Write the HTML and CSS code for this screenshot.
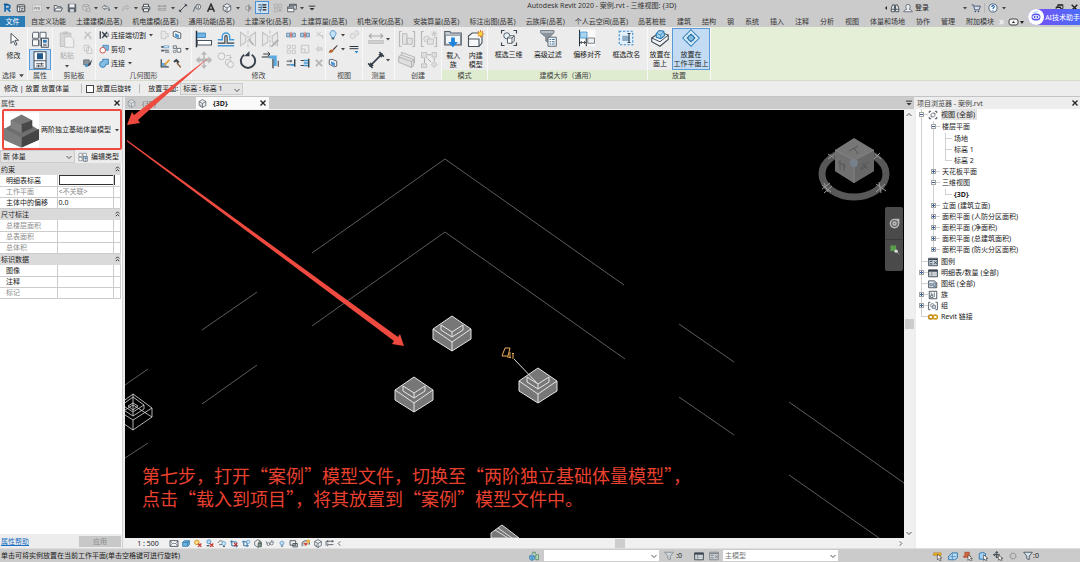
FILE: index.html
```
<!DOCTYPE html>
<html lang="zh">
<head>
<meta charset="utf-8">
<title>Autodesk Revit 2020 - 案例.rvt - 三维视图: {3D}</title>
<link rel="stylesheet" href="styles.css">
</head>
<body>
<svg class="defs" aria-hidden="true">
  <symbol id="down" viewBox="0 0 6 6"><path d="M1 2h4L3 4.500z" fill="#444"/></symbol>
  <symbol id="chev" viewBox="0 0 8 8"><path d="M1.500 3L4 5.500 6.500 3" fill="none" stroke="#555"/></symbol>
  <symbol id="dbl" viewBox="0 0 8 8"><path d="M2 3.500l2-2 2 2M2 6.500l2-2 2 2" fill="none" stroke="#222"/></symbol>
  <symbol id="x" viewBox="0 0 8 8"><path d="M1.500 1.500l5 5m0-5l-5 5" stroke="#222" stroke-width="1.300"/></symbol>
  <symbol id="rlogo" viewBox="0 0 16 16"><path d="M5 14V3h4.500a3 3 0 010 6H5m4 0l4 5" fill="none" stroke="#1b6fb5" stroke-width="3"/><path d="M3 2h6" stroke="#0d4a80" stroke-width="2"/></symbol>
  <symbol id="home" viewBox="0 0 16 16"><rect x="2" y="3" width="12" height="11" rx="1" fill="#f4f4f4" stroke="#3b444e" stroke-width="1.600"/><path d="M2 6h12M6 6v8M8 9h4M8 11.500h4" stroke="#3b444e" stroke-width="1.400"/></symbol>
  <symbol id="pm" viewBox="0 0 20 16"><rect x="1" y="2" width="18" height="13" rx="1" fill="#e2e2e2" stroke="#a8a8a8"/><path d="M4 12V6h3v3H4M9 12V6l2 3 2-3v6M15 6v6" fill="none" stroke="#999" stroke-width="1.500"/></symbol>
  <symbol id="open" viewBox="0 0 16 16"><path d="M2 13V4h4l1 2h6v2M2 13l3-5h10l-2 5z" fill="#eee" stroke="#4b5560" stroke-width="1.400"/></symbol>
  <symbol id="save" viewBox="0 0 16 16"><path d="M2 2h12v12H2z" fill="#5d6670" stroke="#3b444e"/><path d="M4 2h8v5H4z" fill="#f2f2f2"/><path d="M5 10h6v4H5z" fill="#e2e2e2"/></symbol>
  <symbol id="sync" viewBox="0 0 16 16"><path d="M8 2l5 2v6l-5 3-5-3V4zM3 4l5 2 5-2M8 6v7" fill="#d5d5d5" stroke="#949494"/><circle cx="12" cy="11" r="3" fill="#ccc" stroke="#999"/></symbol>
  <symbol id="undo" viewBox="0 0 16 16"><path d="M6 3L2 7l4 4V8.500c4-1 6 0 7 4 1-5-2-8-7-7z" fill="#eee" stroke="#4c5763" stroke-width="1.200"/></symbol>
  <symbol id="redo" viewBox="0 0 16 16"><path d="M10 3l4 4-4 4V8.500c-4-1-6 0-7 4-1-5 2-8 7-7z" fill="#ccc" stroke="#aaa" stroke-width="1.200"/></symbol>
  <symbol id="print" viewBox="0 0 16 16"><path d="M4 6V2h8v4M4 11H2V6h12v5h-2M4 9h8v5H4z" fill="#eee" stroke="#3b444e" stroke-width="1.400"/></symbol>
  <symbol id="meas" viewBox="0 0 16 16"><path d="M2 5h12M4 3L2 5l2 2m8-4l2 2-2 2" fill="none" stroke="#888" stroke-width="1.300"/><rect x="2" y="9" width="12" height="3" fill="#bbb" stroke="#999"/></symbol>
  <symbol id="dim" viewBox="0 0 16 16"><path d="M3 13L13 3M1 11l4 4m6-14l4 4" stroke="#333d48" stroke-width="1.400"/><path d="M2 14l1-4 3 3zM14 2l-1 4-3-3z" fill="#333d48"/></symbol>
  <symbol id="tag" viewBox="0 0 16 16"><circle cx="10" cy="6" r="4" fill="#eee" stroke="#4b5560" stroke-width="1.300"/><path d="M2 14l3-8h2M9 5l1-1v5" fill="none" stroke="#4b5560" stroke-width="1.300"/></symbol>
  <symbol id="abig" viewBox="0 0 16 16"><path d="M2.500 14L8 2l5.500 12M5 10h6" fill="none" stroke="#333" stroke-width="2.600"/></symbol>
  <symbol id="cube" viewBox="0 0 16 16"><path d="M8 1l6 3.500v7L8 15l-6-3.500v-7z" fill="#eef1f4" stroke="#4b5560" stroke-width="1.300"/><path d="M2 4.500L8 8l6-3.500M8 8v7M5 10v3" fill="none" stroke="#4b5560" stroke-width="1.300"/></symbol>
  <symbol id="sect" viewBox="0 0 16 16"><circle cx="8" cy="8" r="3.500" fill="#ddd" stroke="#8b8b8b" stroke-width="1.300"/><path d="M8 1v14l6-7z" fill="#999"/></symbol>
  <symbol id="thin" viewBox="0 0 16 16"><path d="M2 3h5M2 7h5M2 11h5" stroke="#222" stroke-width="1.200"/><path d="M9 3h6M9 7h6M9 11h6" stroke="#222" stroke-width="2.200"/><path d="M9 1L5 15" stroke="#2b7ac0" stroke-width="1.200"/></symbol>
  <symbol id="closew" viewBox="0 0 16 16"><path d="M2 2h5v5H2zM9 2h5v5H9zM2 9h5v5H2z" fill="none" stroke="#aaa" stroke-width="1.200"/><path d="M9 9l5 5m0-5l-5 5" stroke="#999" stroke-width="1.500"/></symbol>
  <symbol id="switch" viewBox="0 0 16 16"><path d="M4 2h11v8H4z" fill="#ddd" stroke="#4b5560" stroke-width="1.300"/><path d="M1 6h10v8H1z" fill="#f4f4f4" stroke="#4b5560" stroke-width="1.300"/><path d="M4 3.500h11M1 8h10" stroke="#4b5560" stroke-width="2"/></symbol>
  <symbol id="custom" viewBox="0 0 16 16"><path d="M3 5h10" stroke="#333" stroke-width="1.600"/><path d="M4 8h8l-4 4z" fill="#333"/></symbol>
  <symbol id="binoc" viewBox="0 0 16 16"><path d="M2 14V9l2-6h3v11zM14 14V9l-2-6H9v11zM7 7h2M2 10h5m2 0h5" fill="#f4f4f4" stroke="#36404a" stroke-width="1.400"/></symbol>
  <symbol id="person" viewBox="0 0 16 16"><path d="M8 2a3.500 4 0 013.500 4c0 2-1 3-1.500 4 2 1 4 1 5 4H1c1-3 3-3 5-4-.5-1-1.500-2-1.500-4A3.500 4 0 018 2z" fill="#eee" stroke="#55606c" stroke-width="1.300"/></symbol>
  <symbol id="cart" viewBox="0 0 16 16"><path d="M1 3h3l2 8h7l2-6H5" fill="#d8e2ee" stroke="#3d4e72" stroke-width="1.400"/><circle cx="7" cy="13.500" r="1.300" fill="#3d4e72"/><circle cx="12" cy="13.500" r="1.300" fill="#3d4e72"/></symbol>
  <symbol id="help" viewBox="0 0 16 16"><circle cx="8" cy="8" r="6.500" fill="#f6f9fc" stroke="#35506e" stroke-width="1.300"/><path d="M6 6.500c0-3 4-3 4-.5 0 1.500-2 1.500-2 3.500M8 11v1.500" fill="none" stroke="#1f5fae" stroke-width="1.700"/></symbol>
  <symbol id="restore" viewBox="0 0 16 16"><path d="M5 7V3h9v7h-4M2 7h8v6H2z" fill="none" stroke="#222" stroke-width="1.600"/><path d="M5 4h9M2 8h8" stroke="#222" stroke-width="2"/></symbol>

  <symbol id="cursor" viewBox="0 0 24 24"><path d="M8 3v16l4-4 3 7 2.500-1-3-7H20z" fill="#fff" stroke="#333d48" stroke-width="1.400"/></symbol>
  <symbol id="proptype" viewBox="0 0 24 24"><path d="M3 3h7v8H2V5zM12 3h8v8h-8zM2 13h8v8H2zM12 13h4v8h-4z" fill="#f8f8f8" stroke="#59646f" stroke-width="1.300"/><rect x="14" y="11" width="9" height="12" fill="#fff" stroke="#37424e" stroke-width="1.200"/><path d="M16 13h5v4h-5z" fill="#2f76b5"/><path d="M16 19h5M16 21h5" stroke="#37424e"/></symbol>
  <symbol id="prop" viewBox="0 0 24 24"><rect x="4" y="1" width="16" height="22" fill="#fff" stroke="#46515c" stroke-width="1.400"/><rect x="8" y="3" width="8" height="8" fill="#24598c"/><path d="M4 13h16M7 17h10M7 20h10M14 15.500v3M10 18.500v3" stroke="#46515c" stroke-width="1.300"/></symbol>
  <symbol id="paste" viewBox="0 0 24 24"><path d="M3 4h14v18H3z" fill="#d6d6d6" stroke="#b8b8b8"/><path d="M7 2h6v4H7z" fill="#c2c2c2"/><path d="M9 9h8l4 4v10H9z" fill="#f0f0f0" stroke="#bbb"/></symbol>
  <symbol id="cutx" viewBox="0 0 16 16"><path d="M3 3l9 9m0-9L3 12" stroke="#bbb" stroke-width="1.800"/><circle cx="3.500" cy="13" r="1.500" fill="none" stroke="#bbb"/><circle cx="12" cy="13" r="1.500" fill="none" stroke="#bbb"/></symbol>
  <symbol id="copy" viewBox="0 0 16 16"><path d="M2 2h7v9H2zM6 5h5l3 3v7H6z" fill="#eee" stroke="#bcbcbc" stroke-width="1.200"/></symbol>
  <symbol id="brushc" viewBox="0 0 16 16"><path d="M1 3h9v8H1z" fill="#8b959e" stroke="#49535e"/><path d="M15 2L9 9l-2 5 5-3z" fill="#3d4853"/><path d="M4 14c2 1 4 0 4-3L6 9c-1 2-4 2-2 5z" fill="#3a8fd0"/></symbol>
  <symbol id="cope" viewBox="0 0 16 16"><path d="M2 2v12M5 3l8 9M5 13l8-10" stroke="#2f3943" stroke-width="2"/><path d="M7 6h8v4H7z" fill="none" stroke="#48525c"/></symbol>
  <symbol id="cutg" viewBox="0 0 16 16"><path d="M6 2h9v8H6z" fill="#78b7e2" stroke="#3278ae"/><circle cx="6" cy="10" r="4.500" fill="#fff" stroke="#d44b43" stroke-width="1.500"/></symbol>
  <symbol id="joing" viewBox="0 0 16 16"><path d="M6 2h9v8H11a5 5 0 11-5-5z" fill="#83bde4" stroke="#2b74aa" stroke-width="1.300"/></symbol>
  <symbol id="gjoin" viewBox="0 0 16 16"><path d="M2 2h7v4h4v5H9v3H2z" fill="#e8e8e8" stroke="#c0c0c0" stroke-width="1.300"/></symbol>
  <symbol id="bwall" viewBox="0 0 16 16"><path d="M2 3l4-1 8 3v8l-4 1-8-4z" fill="#f0f3f6" stroke="#3d4854" stroke-width="1.300"/><path d="M5 5l6 3v5L5 10z" fill="#4492cf"/></symbol>
  <symbol id="beam" viewBox="0 0 16 16"><path d="M2 3h4v3H2zM2 9h4v3H2z" fill="#444f5a"/><path d="M6 3h8v3H6z" fill="#fff" stroke="#2f7ebd"/><path d="M6 10h8M8 13h7" stroke="#4a5560" stroke-width="1.500"/></symbol>
  <symbol id="split" viewBox="0 0 16 16"><path d="M2 3h5v4H2zM8 7h6v6H8z" fill="#fff" stroke="#4a5560" stroke-width="1.300"/><circle cx="4" cy="12" r="2" fill="none" stroke="#4a5560"/></symbol>
  <symbol id="paint" viewBox="0 0 16 16"><path d="M2 2v12h12" fill="none" stroke="#3b4650" stroke-width="2"/><path d="M3 8h7v5H3z" fill="#61a8da"/><path d="M14 2L7 9l-1 3 3-1 7-7z" fill="#e5a13a"/></symbol>
  <symbol id="hammer" viewBox="0 0 16 16"><path d="M2 5l5-4 5 5-3 3-2-3-3 1z" fill="#3c4650"/><path d="M8 8l6 7" stroke="#8a5933" stroke-width="2.200"/></symbol>

  <symbol id="align" viewBox="0 0 24 24"><path d="M2 1v22" stroke="#252f3a" stroke-width="2"/><path d="M3 4h11v6H3z" fill="#72b4e3" stroke="#2c79b5"/><path d="M3 14h19v6H3z" fill="#fff" stroke="#49545f" stroke-width="1.400"/></symbol>
  <symbol id="offset" viewBox="0 0 24 24"><path d="M1 21h22M1 13h6V9a5 5 0 0110 0v4h6" fill="none" stroke="#4199d8" stroke-width="1.800"/><path d="M1 17.500h9.500V9c0-2 3-2 3 0v8.500H23" fill="none" stroke="#303b47" stroke-width="1.500"/></symbol>
  <symbol id="mirror" viewBox="0 0 24 24"><path d="M2 3l7 5v8l-7 5zM22 3l-7 5v8l7 5z" fill="#e8e8e8" stroke="#c2c2c2" stroke-width="1.400"/><path d="M12 1v22" stroke="#b4b4b4" stroke-dasharray="4 2"/><path d="M13 12l6 8" stroke="#b4b4b4" stroke-width="2"/></symbol>
  <symbol id="mirror2" viewBox="0 0 24 24"><path d="M2 3l7 5v8l-7 5zM22 3l-7 5v8l7 5z" fill="#e8e8e8" stroke="#c2c2c2" stroke-width="1.400"/><path d="M12 1v22" stroke="#b4b4b4" stroke-dasharray="4 2"/><path d="M22 12l-8 8-1 3 3-1 8-8z" fill="#b4b4b4"/></symbol>
  <symbol id="move" viewBox="0 0 24 24"><path d="M12 0l4 5h-3v5h5V7l5 5-5 5v-3h-5v5h3l-4 5-4-5h3v-5H6v3l-5-5 5-5v3h5V5H8z" fill="#b9b9b9"/></symbol>
  <symbol id="copyel" viewBox="0 0 24 24"><circle cx="6" cy="7" r="4.500" fill="#eee" stroke="#bcbcbc" stroke-width="1.300"/><circle cx="15" cy="15" r="4" fill="#eee" stroke="#bcbcbc" stroke-width="1.300"/><circle cx="18" cy="18" r="4" fill="#eee" stroke="#bcbcbc" stroke-width="1.300"/><path d="M12 6h6v4m-2-2l2 2 2-2" fill="none" stroke="#bbb"/></symbol>
  <symbol id="rotate" viewBox="0 0 24 24"><path d="M7 5a9.500 9.500 0 1010 0" fill="none" stroke="#38424c" stroke-width="2.600"/><path d="M14 0v7H7z" fill="#38424c"/></symbol>
  <symbol id="trim" viewBox="0 0 24 24"><path d="M1 8h13M16 10v13" stroke="#242e38" stroke-width="1.600"/><path d="M11 8h8v12" fill="none" stroke="#59a9e0" stroke-width="4"/><path d="M3 4h9m-3-3l3 3-3 3M23 21v-8" fill="none" stroke="#333" stroke-width="1.300"/></symbol>
  <symbol id="splitb" viewBox="0 0 16 16"><path d="M1 5h5v6H1zM10 5h5v6h-5z" fill="#a9cee8" stroke="#3d6b90"/><path d="M6 8h4M8 3v10" stroke="#d04c45" stroke-width="1.400"/></symbol>
  <symbol id="unpin" viewBox="0 0 16 16"><path d="M4 3l7 7m0-7l-7 7M9 9h5v5" fill="none" stroke="#bcbcbc" stroke-width="1.400"/></symbol>
  <symbol id="array" viewBox="0 0 16 16"><path d="M2 2h5v5H2zM10 2h5v5h-5zM2 10h5v5H2zM10 10h5v5h-5z" fill="#eee" stroke="#bcbcbc" stroke-width="1.200"/></symbol>
  <symbol id="scale" viewBox="0 0 16 16"><path d="M2 2h12v12H2zM2 8h6v6" fill="none" stroke="#bcbcbc" stroke-width="1.300"/></symbol>
  <symbol id="pin" viewBox="0 0 16 16"><path d="M2 8h4m0-4v8l3-2h4V6H9z" fill="#ddd" stroke="#bcbcbc"/></symbol>
  <symbol id="ext" viewBox="0 0 16 16"><path d="M14 2v12" stroke="#222c36" stroke-width="2"/><path d="M1 5h8m-2-2l2 2-2 2M1 11h6" stroke="#303a44" stroke-width="1.400" fill="none"/><path d="M7 11h6" stroke="#4198d5" stroke-width="3"/></symbol>
  <symbol id="ext2" viewBox="0 0 16 16"><path d="M14 1v14" stroke="#222c36" stroke-width="2"/><path d="M1 4h6M1 12h6" stroke="#303a44" stroke-width="1.500"/><path d="M6 4h7M6 8h7M6 12h7" stroke="#4198d5" stroke-width="2.500"/></symbol>
  <symbol id="del" viewBox="0 0 16 16"><path d="M3 3l10 10M13 3L3 13" stroke="#b5b5b5" stroke-width="3"/></symbol>
  <symbol id="bulb" viewBox="0 0 16 16"><path d="M5.500 10C1 6 4 1 8 1s7 5 2.500 9v2h-5z" fill="#c3e2f8" stroke="#4384bf" stroke-width="1.300"/><path d="M6 14h4" stroke="#3b4650" stroke-width="2"/></symbol>
  <symbol id="bulb2" viewBox="0 0 16 16"><path d="M6 10c-3-3-1-6 2-6s5 3 2 6v1H6z" fill="#c3e2f8" stroke="#4384bf" stroke-width="1.300"/><path d="M6.500 13h3" stroke="#3b4650" stroke-width="1.500"/></symbol>
  <symbol id="brush" viewBox="0 0 16 16"><path d="M15 1L8 8l1 2 6-7z" fill="#4e3524"/><path d="M1 14c1-5 4-6 7-5l1 2c-2 3-5 3-8 3z" fill="#b4652c"/></symbol>
  <symbol id="dispg" viewBox="0 0 16 16"><path d="M2 7l4-2 4 2v5l-4 2-4-2zM9 3l3-2 3 2v4l-3 2" fill="#e3e3e3" stroke="#bcbcbc"/></symbol>
  <symbol id="lwt" viewBox="0 0 16 16"><path d="M1 4h14M1 7.500h14" stroke="#2a3440" stroke-width="1.600"/><path d="M9 11h6l-3 4z" fill="#2e84c9"/></symbol>
  <symbol id="mbig" viewBox="0 0 24 24"><path d="M3 8h18M6 5L3 8l3 3m12-6l3 3-3 3" fill="none" stroke="#aaa" stroke-width="1.500"/><path d="M2 14h20v4H2z" fill="#d0d0d0" stroke="#bbb"/></symbol>
  <symbol id="grp" viewBox="0 0 24 24"><path d="M5 2H2v20h3M19 2h3v20h-3" fill="none" stroke="#b8b8b8" stroke-width="1.600"/><path d="M6 5h6v14H6zM12 11h7v8h-7z" fill="#e3e3e3" stroke="#bababa" stroke-width="1.300"/></symbol>
  <symbol id="grp2" viewBox="0 0 24 24"><path d="M5 2H2v20h3M19 10h3v12h-3" fill="none" stroke="#b8b8b8" stroke-width="1.600"/><circle cx="9" cy="12" r="4" fill="#e5e5e5" stroke="#bababa"/><path d="M10 12h8v7h-8z" fill="#e3e3e3" stroke="#bababa"/><path d="M19 1v8m-4-4h8m-7-3l6 6m0-6l-6 6" stroke="#bbb"/></symbol>
  <symbol id="asm" viewBox="0 0 24 24"><path d="M1 8l17 6v8L1 15zM1 8l3-3 17 6v8l-3 3m0-8l3-3" fill="#dfdfdf" stroke="#b5b5b5" stroke-width="1.400"/><path d="M5 5V2l17 6v8" fill="none" stroke="#b5b5b5" stroke-width="1.400"/></symbol>
  <symbol id="parts" viewBox="0 0 24 24"><path d="M2 2h7v7H2zM16 2h6v6h-6zM2 17h7v5H2zM15 18l4-4 4 4-4 4z" fill="#ddd" stroke="#b8b8b8"/><path d="M10 5h5M6 10v6M10 10l5 5M19 9v4" stroke="#aaa" stroke-width="1.300"/></symbol>
  <symbol id="loadf" viewBox="0 0 24 24"><path d="M1 20V2h7l1 2h14v16z" fill="#c3ccd5" stroke="#56616d" stroke-width="1.500"/><path d="M2 7h20v12H2z" fill="#f3f6f9" stroke="#68727d"/><path d="M9.500 10h5v6h4L12 23l-6.500-7h4z" fill="#1d83dc"/></symbol>
  <symbol id="inplace" viewBox="0 0 24 24"><path d="M2 8l5-4h13v13l-4 5H2zM2 12h14v10" fill="#f7f8f9" stroke="#48535e" stroke-width="1.500"/><path d="M18 0v10M13 5h10M14.500 1.500l7 7m0-7l-7 7" stroke="#e4831e" stroke-width="1.400"/><circle cx="18" cy="5" r="2.500" fill="#ffd63d"/></symbol>
  <symbol id="box3" viewBox="0 0 24 24"><path d="M2 6V2h4M18 2h4v4M2 18v4h4M22 18v4h-4" fill="none" stroke="#3b4650" stroke-width="1.500"/><circle cx="9" cy="9" r="4" fill="#eaf2f8" stroke="#4a5f70" stroke-width="1.300"/><path d="M10 12l3-3h6v7l-3 3h-6zM10 12h6v7m0-7l3-3" fill="#fff" stroke="#46525d" stroke-width="1.200"/></symbol>
  <symbol id="filter" viewBox="0 0 24 24"><path d="M2 2h18v3l-6 6v8l-5-3v-5L2 5z" fill="#8b949c" stroke="#66717c"/><path d="M3 4h16" stroke="#d8dde1" stroke-width="1.500"/><path d="M12 11h11v12H12z" fill="#f9fafb" stroke="#59646e" stroke-width="1.300"/><path d="M14 14h2m1 0h4m-7 3h2m1 0h4m-7 3h2m1 0h4" stroke="#3c6f99" stroke-width="1.300"/></symbol>
  <symbol id="offal" viewBox="0 0 24 24"><path d="M1 1h22v22H1z" fill="#fafafa"/><path d="M2 1v22M11 12v11" stroke="#26303a" stroke-width="1.400"/><path d="M3 4h9v8H3z" fill="#a8d4f0" stroke="#358bc4"/><path d="M13 12h9v7h-9z" fill="#eef0f2" stroke="#56616c"/><path d="M3 18h7m-5-2l-2 2 2 2m3-4l2 2-2 2" fill="none" stroke="#222"/></symbol>
  <symbol id="rename" viewBox="0 0 24 24"><path d="M3 3h18v18H3z" fill="#e4f1fb" stroke="#3b91d3" stroke-width="1.500" stroke-dasharray="3 2"/><path d="M7 9h10v7H7z" fill="#8eadc6"/><path d="M14 6h4m-2 0v12m-2 0h4" stroke="#31404e" stroke-width="1.400"/></symbol>
  <symbol id="face" viewBox="0 0 24 24"><path d="M1 12L12 4l11 4v6l-11 9-11-6z" fill="#f1f3f5" stroke="#3c4650" stroke-width="1.400"/><path d="M1 12l11 5 11-9" fill="none" stroke="#3c4650" stroke-width="1.300"/><path d="M7 6l4-4 6 1 1 6-5 4-6-2z" fill="#a7d3ef" stroke="#2578af" stroke-width="1.400"/><path d="M7 6l6 2 4-5m-4 5v5" fill="none" stroke="#2578af"/></symbol>
  <symbol id="wplane" viewBox="0 0 24 24"><path d="M12 1l11 11-11 11L1 12z" fill="#d5e9f7" stroke="#317fb9" stroke-width="1.400"/><path d="M12 7l5 5-5 5-5-5z" fill="#8ec3e9" stroke="#266ea4" stroke-width="1.500"/><path d="M7 7l10 10m0-10L7 17" stroke="#6faed9" stroke-width=".8"/></symbol>

  <symbol id="tview" viewBox="0 0 16 16"><path d="M5 2H2v3m9-3h3v3M2 11v3h3m9-3v3h-3" fill="none" stroke="#303b46" stroke-width="1.400"/><path d="M5 7l2-2h4v4l-2 2H5z" fill="#fff" stroke="#4b5863" stroke-width="1.300"/></symbol>
  <symbol id="tleg" viewBox="0 0 16 16"><path d="M1 2h14v12H1z" fill="#c2ccd6" stroke="#39444f" stroke-width="1.400"/><path d="M1 4h14M3 7h4m-4 4h4m3-4l4 4m0-4l-4 4" stroke="#39444f" stroke-width="1.600"/></symbol>
  <symbol id="tsch" viewBox="0 0 16 16"><path d="M1 3h14v11H1z" fill="#fff" stroke="#39444f" stroke-width="1.500"/><path d="M1 4.500h14" stroke="#39444f" stroke-width="3"/><path d="M1 8h14M1 11h14M6 4v10" stroke="#64717d"/></symbol>
  <symbol id="tsheet" viewBox="0 0 16 16"><path d="M1 3h9l4 3v8H1z" fill="#eef3f8" stroke="#39444f" stroke-width="1.400"/><path d="M3 7h4v4H3zM9 6h3v7H9z" fill="#9dbbd5" stroke="#5a6a78"/></symbol>
  <symbol id="tfam" viewBox="0 0 16 16"><path d="M2 2h12v12H2z" fill="#fff" stroke="#39444f" stroke-width="1.400"/><path d="M4 9h4v3H4zM10 4v7M5 4v3h3" fill="none" stroke="#50606e" stroke-width="1.300"/></symbol>
  <symbol id="tgrp" viewBox="0 0 16 16"><path d="M4 2H1v12h3m8-12h3v12h-3" fill="none" stroke="#39444f" stroke-width="1.300"/><circle cx="7" cy="7" r="3" fill="#eee" stroke="#5a6772"/><path d="M7 7h5v5H7z" fill="#c5d3df" stroke="#5a6772"/></symbol>
  <symbol id="tlink" viewBox="0 0 16 16"><rect x="1" y="5" width="7" height="6" rx="3" fill="none" stroke="#c08a1a" stroke-width="2.500"/><rect x="8" y="5" width="7" height="6" rx="3" fill="none" stroke="#d49c22" stroke-width="2.500"/></symbol>

  <symbol id="vmod" viewBox="0 0 16 16"><path d="M1 3h14v10H1z" fill="#fff" stroke="#36414c" stroke-width="1.500"/><path d="M1 3l4 5-4 5m14-10l-4 5 4 5M5 8h6" fill="none" stroke="#36414c"/></symbol>
  <symbol id="vstyle" viewBox="0 0 16 16"><path d="M2 6l3-3h9v7l-3 3H2zM2 6h9v7m0-7l3-3" fill="#6fb6e4" stroke="#23699c" stroke-width="1.300"/></symbol>
  <symbol id="vsun" viewBox="0 0 16 16"><circle cx="6" cy="6" r="4" fill="#ffe08a" stroke="#cf9018" stroke-width="1.600"/><path d="M8 8l6 6m0-6l-6 6" stroke="#c7322b" stroke-width="2"/></symbol>
  <symbol id="vshad" viewBox="0 0 16 16"><circle cx="6" cy="5" r="3.500" fill="#bfe0f5" stroke="#2e82bf" stroke-width="1.400"/><path d="M2 12h5" stroke="#36414c" stroke-width="2"/><path d="M8 8l6 6m0-6l-6 6" stroke="#c7322b" stroke-width="2"/></symbol>
  <symbol id="vrend" viewBox="0 0 16 16"><path d="M1 7c2-5 8-5 10 0M3 10h5" fill="none" stroke="#4a5560" stroke-width="1.400"/><circle cx="11" cy="8" r="3.500" fill="#c8e5f8" stroke="#3685bf"/><path d="M10 13h3" stroke="#444" stroke-width="2"/></symbol>
  <symbol id="vcrop" viewBox="0 0 16 16"><path d="M4 2v10h11M1 5h11v10" fill="none" stroke="#2e6fa3" stroke-width="1.700"/><path d="M8 7l6 6m0-6l-6 6" stroke="#c7322b" stroke-width="1.800"/></symbol>
  <symbol id="vcrop2" viewBox="0 0 16 16"><path d="M4 3v9h9M1 5h9v9" fill="none" stroke="#2e6fa3" stroke-width="1.700"/><circle cx="12" cy="5" r="3" fill="#c8e5f8" stroke="#3685bf"/></symbol>
  <symbol id="vlock" viewBox="0 0 16 16"><path d="M2 5l6-4 6 4v6l-6 4-6-4z" fill="#eee" stroke="#4a5560" stroke-width="1.300"/><path d="M8 8h6v6H8zM9 8V6c0-2 4-2 4 0v2" fill="#7f9b8c" stroke="#3a4b42"/></symbol>
  <symbol id="vglass" viewBox="0 0 16 16"><path d="M1 4l2 4m6-4l3-1 3 3" fill="none" stroke="#4a5560" stroke-width="1.300"/><circle cx="5" cy="9" r="2.500" fill="#fff" stroke="#4a5560" stroke-width="1.300"/><circle cx="11" cy="8" r="2.500" fill="#fff" stroke="#4a5560" stroke-width="1.300"/></symbol>
  <symbol id="vgear" viewBox="0 0 16 16"><circle cx="8" cy="8" r="4.500" fill="none" stroke="#999" stroke-width="2.500" stroke-dasharray="2.500 1"/></symbol>
  <symbol id="vprop" viewBox="0 0 16 16"><path d="M1 3h10v8H1zM6 8h8v6H6z" fill="#eee" stroke="#3e4954" stroke-width="1.500"/><path d="M8 11h4" stroke="#3e4954"/></symbol>
  <symbol id="vana" viewBox="0 0 16 16"><path d="M1 13V6l5-3h8v7" fill="#ccc" stroke="#3e4954" stroke-width="1.300"/><path d="M3 7h8l-3 6z" fill="#d95237"/><circle cx="12" cy="4" r="3" fill="#f2b233"/></symbol>
  <symbol id="vcons" viewBox="0 0 16 16"><path d="M1 12V4h14M4 2v4m8-4v4M5 10h9M4 13V8" fill="none" stroke="#3e4954" stroke-width="1.400"/></symbol>
  <symbol id="sel1" viewBox="0 0 16 16"><path d="M1 3h12v4H1z" fill="#f4b52c" stroke="#ad7a12"/><path d="M7 5v9l2-2 2 4 2-1-2-4h3z" fill="#fff" stroke="#333"/></symbol>
  <symbol id="sel2" viewBox="0 0 16 16"><path d="M1 8l6-5h8v8l-4 3H1z" fill="#b9daf1" stroke="#2d78b1" stroke-width="1.500"/><path d="M3 9h10M7 3v11" stroke="#2d78b1"/></symbol>
  <symbol id="sel3" viewBox="0 0 16 16"><path d="M3 2h7v6h2v2H1V8h2z" fill="#d8683e" stroke="#9c3f1e"/><path d="M8 6v9l2-2 2 3 2-1-2-3h3z" fill="#fff" stroke="#333"/></symbol>
  <symbol id="sel4" viewBox="0 0 16 16"><path d="M2 4l5-2 5 2v9H2z" fill="#a6d2ef" stroke="#2d78b1" stroke-width="1.500"/><path d="M9 6v9l2-2 2 3 1-1-1-3h3z" fill="#fff" stroke="#333"/></symbol>
  <symbol id="sel5" viewBox="0 0 16 16"><path d="M6 1v10M1 6h10M4 3l2-2 2 2M4 9l2 2 2-2M3 4L1 6l2 2" fill="none" stroke="#2b343e" stroke-width="1.500"/><path d="M9 7v8l2-2 2 3 1-1-1-3h3z" fill="#fff" stroke="#333"/></symbol>
  <symbol id="sfil" viewBox="0 0 16 16"><path d="M1 2h14l-5 6v6l-4-2V8z" fill="#d7e3ec" stroke="#46525d" stroke-width="1.400"/></symbol>
  <symbol id="wset" viewBox="0 0 16 16"><path d="M1 8l4-2 4 2v5l-4 2-4-2z" fill="#7cbbe5" stroke="#286fa4"/><path d="M1 8l4 2 4-2M5 10v5" fill="none" stroke="#286fa4"/><path d="M6 5V2h4v3M11 6h4v8h-4z" fill="#d4e9c7" stroke="#3f7f58" stroke-width="1.300"/></symbol>

  <symbol id="found" viewBox="-20 -1 40 38">
    <path class="solid" d="M0 0l19 13v10L0 35l-19-12V13z"/>
    <path d="M-19 13L0 26l19-13M0 26v9M-11 9L0 16l11-7v5L0 21l-11-7zM0 16v5" fill="none"/>
  </symbol>
</svg>

<div class="app">
  <header class="titlebar">
    <div class="qat">
      <button aria-label="Revit"><svg><use href="#rlogo"/></svg></button>
      <button aria-label="主页"><svg><use href="#home"/></svg></button>
      <button class="gap" aria-label="PM"><svg><use href="#pm"/></svg></button><button class="arr" aria-label="更多"><svg><use href="#down"/></svg></button>
      <button aria-label="打开"><svg><use href="#open"/></svg></button>
      <button aria-label="保存"><svg><use href="#save"/></svg></button>
      <button aria-label="同步"><svg><use href="#sync"/></svg></button><button class="arr" aria-label="更多"><svg><use href="#down"/></svg></button>
      <button aria-label="放弃"><svg><use href="#undo"/></svg></button><button class="arr" aria-label="更多"><svg><use href="#down"/></svg></button>
      <button aria-label="重做"><svg><use href="#redo"/></svg></button><button class="arr" aria-label="更多"><svg><use href="#down"/></svg></button>
      <button aria-label="打印"><svg><use href="#print"/></svg></button>
      <button class="gap" aria-label="测量"><svg><use href="#meas"/></svg></button><button class="arr" aria-label="更多"><svg><use href="#down"/></svg></button>
      <button aria-label="尺寸标注"><svg><use href="#dim"/></svg></button>
      <button aria-label="标记"><svg><use href="#tag"/></svg></button>
      <button aria-label="文字"><svg><use href="#abig"/></svg></button>
      <button class="gap" aria-label="三维视图"><svg><use href="#cube"/></svg></button><button class="arr" aria-label="更多"><svg><use href="#down"/></svg></button>
      <button aria-label="剖面"><svg><use href="#sect"/></svg></button>
      <button class="on" aria-label="细线"><svg><use href="#thin"/></svg></button>
      <button class="gap" aria-label="关闭非活动"><svg><use href="#closew"/></svg></button>
      <button aria-label="切换窗口"><svg><use href="#switch"/></svg></button><button class="arr" aria-label="更多"><svg><use href="#down"/></svg></button>
      <button aria-label="自定义"><svg><use href="#custom"/></svg></button>
    </div>
    <h1 class="title">Autodesk Revit 2020 - 案例.rvt - 三维视图: {3D}</h1>
    <div class="account">
      <span class="left-tri"></span>
      <button aria-label="搜索"><svg><use href="#binoc"/></svg></button>
      <button class="login"><svg><use href="#person"/></svg>登录</button>
      <button class="arr far" aria-label="更多"><svg><use href="#down"/></svg></button>
      <button aria-label="商店"><svg><use href="#cart"/></svg></button>
      <span class="vsep"></span>
      <button aria-label="帮助"><svg><use href="#help"/></svg></button>
      <button class="arr" aria-label="更多"><svg><use href="#down"/></svg></button>
    </div>
    <div class="winbtns">
      <button aria-label="还原"><svg><use href="#restore"/></svg></button>
      <button aria-label="关闭"><svg><use href="#x"/></svg></button>
    </div>
    <button class="ai"><svg viewBox="0 0 18 18"><circle cx="9" cy="9" r="9" fill="#fff"/><rect x="4" y="5" width="10" height="8" rx="4" fill="#5a55f0"/><rect x="5" y="7" width="8" height="4" rx="2" fill="#fff"/><circle cx="7.500" cy="9" r="1" fill="#3947d8"/><circle cx="10.500" cy="9" r="1" fill="#3947d8"/><path d="M6 4l5-1" stroke="#7dc8ff"/></svg>AI技术助手</button>
  </header>

  <nav class="tabs">
    <button class="file">文件</button>
    <div class="tabset plug">
      <button>自定义功能</button><button>土建建模(品茗)</button><button>机电建模(品茗)</button><button>通用功能(品茗)</button><button>土建深化(品茗)</button><button>土建算量(品茗)</button><button>机电深化(品茗)</button><button>安装算量(品茗)</button><button>标注出图(品茗)</button><button>云族库(品茗)</button><button>个人云空间(品茗)</button>
    </div>
    <div class="tabset core">
      <button>品茗桩桩</button><button>建筑</button><button>结构</button><button>钢</button><button>系统</button><button>插入</button><button>注释</button><button>分析</button><button>视图</button><button>体量和场地</button><button>协作</button><button>管理</button><button>附加模块</button>
    </div>
    <span class="more">»</span>
    <button class="mini" aria-label="最小化功能区"><svg viewBox="0 0 16 8"><rect x="1" y="1" width="9" height="6" rx="2" fill="#f2f2f2" stroke="#444"/><path d="M4 5h3L5.500 3zM12 3h4l-2 3z" fill="#222"/></svg></button>
  </nav>

  <section class="ribbon">
    <div class="panel w-sel"><div class="body"><button class="big"><svg><use href="#cursor"/></svg>修改</button></div><div class="cap">选择 <svg><use href="#down"/></svg></div></div>
    <div class="panel w-prop"><div class="body stack"><button class="sq" aria-label="类型属性"><svg><use href="#proptype"/></svg></button><button class="sq on" aria-label="属性"><svg><use href="#prop"/></svg></button></div><div class="cap">属性</div></div>
    <div class="panel w-clip"><div class="body"><button class="big dim"><svg><use href="#paste"/></svg>粘贴<svg class="d"><use href="#down"/></svg></button><div class="g3"><button aria-label="剪切到剪贴板"><svg><use href="#cutx"/></svg></button><button aria-label="复制到剪贴板"><svg><use href="#copy"/></svg></button><button aria-label="匹配类型"><svg><use href="#brushc"/></svg></button></div></div><div class="cap">剪贴板</div></div>
    <div class="panel w-geo"><div class="body">
      <div class="g3 lab"><button><svg><use href="#cope"/></svg>连接端切割<svg class="d"><use href="#down"/></svg></button><button><svg><use href="#cutg"/></svg>剪切<svg class="d"><use href="#down"/></svg></button><button><svg><use href="#joing"/></svg>连接<svg class="d"><use href="#down"/></svg></button></div>
      <div class="g3"><button aria-label="连接屋顶"><svg><use href="#gjoin"/></svg></button><button aria-label="梁柱连接"><svg><use href="#beam"/></svg></button><button aria-label="填色"><svg><use href="#paint"/></svg></button></div>
      <div class="g3 wd"><button aria-label="墙连接"><svg><use href="#bwall"/></svg></button><button aria-label="拆分面"><svg><use href="#split"/></svg><svg class="d"><use href="#down"/></svg></button><button aria-label="拆除"><svg><use href="#hammer"/></svg></button></div>
    </div><div class="cap">几何图形</div></div>
    <div class="panel w-mod"><div class="body">
      <div class="g2 four"><button aria-label="对齐"><svg><use href="#align"/></svg></button><button aria-label="偏移"><svg><use href="#offset"/></svg></button><button aria-label="镜像拾取轴"><svg><use href="#mirror"/></svg></button><button aria-label="镜像绘制轴"><svg><use href="#mirror2"/></svg></button><button aria-label="移动"><svg><use href="#move"/></svg></button><button aria-label="复制"><svg><use href="#copyel"/></svg></button><button aria-label="旋转"><svg><use href="#rotate"/></svg></button><button aria-label="修剪"><svg><use href="#trim"/></svg></button></div>
      <div class="g3 three"><button aria-label="拆分图元"><svg><use href="#splitb"/></svg></button><button aria-label="阵列"><svg><use href="#array"/></svg></button><button aria-label="延伸单个"><svg><use href="#ext"/></svg></button><button aria-label="用间隙拆分"><svg><use href="#splitb"/></svg></button><button aria-label="缩放"><svg><use href="#scale"/></svg></button><button aria-label="延伸多个"><svg><use href="#ext2"/></svg></button><button aria-label="解锁"><svg><use href="#unpin"/></svg></button><button aria-label="锁定"><svg><use href="#pin"/></svg></button><button aria-label="删除"><svg><use href="#del"/></svg></button></div>
    </div><div class="cap">修改</div></div>
    <div class="panel w-view"><div class="body"><div class="g3 wd"><button aria-label="隐藏"><svg><use href="#bulb"/></svg><svg class="d"><use href="#down"/></svg></button><button aria-label="替换"><svg><use href="#brush"/></svg><svg class="d"><use href="#down"/></svg></button><button aria-label="选择框"><svg><use href="#bwall"/></svg></button></div><div class="g3"><button aria-label="置换"><svg><use href="#dispg"/></svg></button><button aria-label="线处理"><svg><use href="#lwt"/></svg></button></div></div><div class="cap">视图</div></div>
    <div class="panel w-meas"><div class="body"><div class="g2 one"><button aria-label="测量距离"><svg><use href="#mbig"/></svg><svg class="d"><use href="#down"/></svg></button><button aria-label="对齐尺寸标注"><svg><use href="#dim"/></svg><svg class="d"><use href="#down"/></svg></button></div></div><div class="cap">测量</div></div>
    <div class="panel w-make"><div class="body"><div class="g2"><button aria-label="创建组"><svg><use href="#grp"/></svg></button><button aria-label="创建类似"><svg><use href="#grp2"/></svg></button><button aria-label="创建部件"><svg><use href="#asm"/></svg></button><button aria-label="创建零件"><svg><use href="#parts"/></svg></button></div></div><div class="cap">创建</div></div>
    <div class="panel ctx w-mode"><div class="body"><button class="big"><svg><use href="#loadf"/></svg><span>载入<br>族</span></button><button class="big"><svg><use href="#inplace"/></svg><span>内建<br>模型</span></button></div><div class="cap">模式</div></div>
    <div class="panel ctx w-master"><div class="body even"><button class="big"><svg><use href="#box3"/></svg>框选三维</button><button class="big"><svg><use href="#filter"/></svg>高级过滤</button><button class="big"><svg><use href="#offal"/></svg>偏移对齐</button><button class="big"><svg><use href="#rename"/></svg>框选改名</button></div><div class="cap">建模大师（通用）</div></div>
    <div class="panel ctx w-place"><div class="body"><button class="big pl"><svg><use href="#face"/></svg><span>放置在<br>面上</span></button><button class="big pl on"><svg><use href="#wplane"/></svg><span>放置在<br>工作平面上</span></button></div><div class="cap">放置</div></div>
  </section>

  <section class="options">
    <span class="ctxname">修改 | 放置 放置体量</span>
    <label class="chk"><input type="checkbox">放置后旋转</label>
    <label class="plane" for="plane">放置平面:</label>
    <span class="selwrap pl-sel"><select id="plane"><option>标高 : 标高 1</option></select><svg><use href="#chev"/></svg></span>
  </section>

  <main class="work">
    <aside class="props">
      <header class="phead"><h2>属性</h2><button aria-label="关闭属性"><svg><use href="#x"/></svg></button></header>
      <button class="typesel">
        <svg class="thumb" viewBox="0 0 36 36"><path d="M0 0h36v36H0z" fill="#fff"/><path d="M18 7l18 11v10L18 36 0 28V17z" fill="#6f6f6f"/><path d="M18 26l18-9v11l-18 8z" fill="#454545"/><path d="M0 16l18 10v10L0 28z" fill="#7c7c7c"/><path d="M18 2l11 6v8l-11 5-11-5V8z" fill="#777"/><path d="M18 12l11-4v8l-11 5z" fill="#484848"/><path d="M7 8l11 5v8L7 16z" fill="#808080"/></svg>
        <span>两阶独立基础体量模型</span><svg class="d"><use href="#down"/></svg>
      </button>
      <div class="filterrow"><span class="selwrap"><select aria-label="类别"><option>新 体量</option></select><svg><use href="#chev"/></svg></span><button class="edit"><svg><use href="#proptype"/></svg>编辑类型</button></div>
      <table class="ptable">
        <colgroup><col class="c1"><col><col class="c3"></colgroup>
        <tbody>
          <tr class="grp"><th colspan="2">约束</th><td><svg><use href="#dbl"/></svg></td></tr>
          <tr><th>明细表标高</th><td><input aria-label="明细表标高"></td><td></td></tr>
          <tr class="ro"><th>工作平面</th><td>&lt;不关联&gt;</td><td></td></tr>
          <tr><th>主体中的偏移</th><td>0.0</td><td></td></tr>
          <tr class="grp"><th colspan="2">尺寸标注</th><td><svg><use href="#dbl"/></svg></td></tr>
          <tr class="ro"><th>总楼层面积</th><td></td><td></td></tr>
          <tr class="ro"><th>总表面积</th><td></td><td></td></tr>
          <tr class="ro"><th>总体积</th><td></td><td></td></tr>
          <tr class="grp"><th colspan="2">标识数据</th><td><svg><use href="#dbl"/></svg></td></tr>
          <tr><th>图像</th><td></td><td></td></tr>
          <tr><th>注释</th><td></td><td></td></tr>
          <tr class="ro"><th>标记</th><td></td><td></td></tr>
        </tbody>
      </table>
      <footer class="pfoot"><a href="#help">属性帮助</a><button disabled>应用</button></footer>
    </aside>

    <section class="doc">
      <div class="vtabs">
        <button class="vtab"><svg><use href="#cube"/></svg>{3D}</button>
        <button class="vtab cur"><svg><use href="#cube"/></svg>{3D}<svg class="cx"><use href="#x"/></svg></button>
        <button class="vmenu" aria-label="视图列表"><svg><use href="#custom"/></svg></button>
      </div>
      <div class="vrow">
        <div class="viewport">
          <svg class="scene">
            <g transform="translate(-125 -110)">
              <path class="levels" d="M312 253L445 159 624 285M312 326L445 232 625 359M202 330l55-38M202 404l55-39M125 385l23-16M125 458l23-15M679 324l55 38M679 397l55 38M789 402l115 81M789 475l90 63"/>
              <use href="#found" x="432" y="315" width="40" height="38"/>
              <use href="#found" x="394" y="376" width="40" height="38"/>
              <use href="#found" x="518" y="367" width="40" height="38"/>
              <path d="M133 394l19 14v9l-19 13-19-13v-9zM114 408l19 12 19-12M133 420v10M133 394v17M114 417l19-12 19 12M122 405l11-8 11 8-11 7zM122 405v4l11 7 11-7v-4M133 412v4M128 406l5-3 5 3-5 4z" fill="none" stroke="#ddd" stroke-width=".8"/>
              <path d="M491 538v-5l11-8 17 13z" fill="#777" stroke="#ddd"/><path d="M495 530l13 8m-10-10l14 10" stroke="#ddd"/>
              <path d="M514 359l23 24" stroke="#ddd"/>
              <path d="M502 356h6l2-8h-5l-3 8m6 0v2m2-6v6m-1-1l1 1 1-1m2-4v6m-1-5l1-1 1 1" fill="none" stroke="#f0ad58"/>
            </g>
          </svg>
          <svg class="vcube" viewBox="0 0 72 66">
            <ellipse cx="36" cy="38" rx="32" ry="23" fill="none" stroke="#585858" stroke-width="7"/>
            <g stroke="#999" stroke-width="1"><path d="M4 53l8-6m-8 2l9 7m-7-9l4 9m-4 1l8-7M58 48l10 7m-10 1l9-8m-6-2l2 11M10 18l6 4m-6 1l7-5m40 0l6 5m-7 0l6-6"/></g>
            <path d="M36 2l20 12v21L36 47 17 35V14z" fill="#777"/><path d="M17 14l19 10v23L17 35z" fill="#707070"/><path d="M36 24l20-10v21L36 47z" fill="#676767"/><path d="M17 14l19 10 20-10M36 24v23" fill="none" stroke="#858585"/><path d="M31 15l9-5m-4 2l4 6M22 24v10m-2-8l8 5m-2-4v8m17-3l7-6m-6 1l5 6m-7 1l7-4" fill="none" stroke="#555"/><circle cx="36" cy="27" r="4" fill="#77818c"/>
          </svg>
          <div class="navbar">
            <button aria-label="控制盘"><svg viewBox="0 0 16 16"><path d="M14 2v6a6 6 0 11-6-6z" fill="#bbb"/><circle cx="8" cy="8" r="3.500" fill="none" stroke="#666" stroke-width="1.500"/><circle cx="8" cy="8" r="1" fill="#777"/></svg></button>
            <button aria-label="缩放区域"><svg viewBox="0 0 16 16"><path d="M3 3h7v7H3z" fill="#5b9d4f"/><circle cx="10" cy="10" r="2" fill="#ddd"/><path d="M11 11l3 3" stroke="#aaa"/></svg></button>
          </div>
          <p class="note">第七步，打开“案例”模型文件，切换至“两阶独立基础体量模型”，<br>点击“载入到项目”，将其放置到“案例”模型文件中。</p>
        </div>
        <div class="vscroll"><svg><use href="#chev"/></svg><i></i><svg><use href="#chev"/></svg></div>
      </div>
      <div class="vctrl">
        <button class="scale">1 : 500</button>
        <button aria-label="详细程度"><svg><use href="#vmod"/></svg></button><button aria-label="视觉样式"><svg><use href="#vstyle"/></svg></button><button aria-label="日光"><svg><use href="#vsun"/></svg></button><button aria-label="阴影"><svg><use href="#vshad"/></svg></button><button aria-label="渲染"><svg><use href="#vrend"/></svg></button><button aria-label="裁剪"><svg><use href="#vcrop"/></svg></button><button aria-label="裁剪区域"><svg><use href="#vcrop2"/></svg></button><button aria-label="锁定视图"><svg><use href="#vlock"/></svg></button><button aria-label="临时隐藏"><svg><use href="#vglass"/></svg></button><button aria-label="显示隐藏"><svg><use href="#bulb2"/></svg></button><button aria-label="临时属性"><svg><use href="#vprop"/></svg></button><button aria-label="分析模型"><svg><use href="#vana"/></svg></button><button aria-label="位移集"><svg><use href="#cube"/></svg></button><button aria-label="约束"><svg><use href="#vcons"/></svg></button>
        <span class="ang"><svg class="r90"><use href="#chev"/></svg></span>
        <div class="hscroll"><i></i></div>
        <span class="ang"><svg class="r270"><use href="#chev"/></svg></span>
        <span class="grip"></span>
      </div>
    </section>

    <aside class="browser">
      <header class="phead"><h2>项目浏览器 - 案例.rvt</h2><button aria-label="关闭浏览器"><svg><use href="#x"/></svg></button></header>
      <ul class="tree">
        <li><div class="row"><b class="ex minus"></b><svg><use href="#tview"/></svg><span class="hit">视图 (全部)</span></div>
          <ul>
            <li><div class="row"><b class="ex minus"></b>楼层平面</div>
              <ul><li><div class="row"><b class="no"></b>场地</div></li><li><div class="row"><b class="no"></b>标高 1</div></li><li><div class="row"><b class="no"></b>标高 2</div></li></ul></li>
            <li><div class="row"><b class="ex"></b>天花板平面</div></li>
            <li><div class="row"><b class="ex minus"></b>三维视图</div>
              <ul><li><div class="row"><b class="no"></b><strong>{3D}</strong></div></li></ul></li>
            <li><div class="row"><b class="ex"></b>立面 (建筑立面)</div></li>
            <li><div class="row"><b class="ex"></b>面积平面 (人防分区面积)</div></li>
            <li><div class="row"><b class="ex"></b>面积平面 (净面积)</div></li>
            <li><div class="row"><b class="ex"></b>面积平面 (总建筑面积)</div></li>
            <li><div class="row"><b class="ex"></b>面积平面 (防火分区面积)</div></li>
          </ul></li>
        <li><div class="row"><b class="no"></b><svg><use href="#tleg"/></svg>图例</div></li>
        <li><div class="row"><b class="ex"></b><svg><use href="#tsch"/></svg>明细表/数量 (全部)</div></li>
        <li><div class="row"><b class="no"></b><svg><use href="#tsheet"/></svg>图纸 (全部)</div></li>
        <li><div class="row"><b class="ex"></b><svg><use href="#tfam"/></svg>族</div></li>
        <li><div class="row"><b class="ex"></b><svg><use href="#tgrp"/></svg>组</div></li>
        <li><div class="row"><b class="no"></b><svg><use href="#tlink"/></svg>Revit 链接</div></li>
      </ul>
    </aside>
  </main>

  <footer class="status">
    <span class="msg">单击可将实例放置在当前工作平面(单击空格键可进行旋转)</span>
    <svg><use href="#wset"/></svg>
    <span class="selwrap st"><select aria-label="工作集"><option></option></select><svg><use href="#chev"/></svg></span>
    <svg class="off"><use href="#sfil"/></svg><span class="zero">:0</span>
    <svg><use href="#tsch"/></svg><svg class="off"><use href="#tleg"/></svg>
    <span class="selwrap st dimtxt"><select aria-label="设计选项"><option>主模型</option></select><svg><use href="#chev"/></svg></span>
    <span class="selgrp"><svg><use href="#sel1"/></svg><svg><use href="#sel2"/></svg><svg><use href="#sel3"/></svg><svg><use href="#sel4"/></svg><svg><use href="#sel5"/></svg><svg><use href="#vgear"/></svg><svg><use href="#sfil"/></svg></span><span class="count">:0</span>
  </footer>

  <svg class="arrows" aria-hidden="true">
    <path d="M210 56.500L138 120l2 3-13 2 5-13 2 3z"/>
    <path d="M127 140l271 197 2-3 4 12-12-2 2-3L127 141.500z"/>
  </svg>
</div>
</body>
</html>
```
FILE: styles.css
```
*, *::before, *::after { box-sizing: border-box; }
body {
  margin: 0;
  font: 7px/9px "Noto Sans", "Noto Sans CJK SC", sans-serif;
  color: #222;
  background: #cbcbcb;
}
button, select, input {
  font: inherit;
  color: inherit;
  border: 0;
  padding: 0;
  margin: 0;
  background: none;
}
button { white-space: nowrap; }
h1, h2, p, ul { margin: 0; padding: 0; font-weight: normal; }
svg { display: block; flex: none; width: 10px; height: 10px; }
.defs { position: absolute; width: 0; height: 0; }
.app { position: relative; min-height: 100vh; display: flex; flex-direction: column; }

/* title bar */
.titlebar { position: relative; display: flex; height: 15px; align-items: center; background: #cbcbcb; }
.qat, .account, .winbtns { display: flex; align-items: center; }
.qat button { width: 14px; height: 13px; display: grid; place-items: center; }
.qat .arr, .account .arr { width: 6px; display: grid; place-items: center; }
.arr svg { width: 6px; height: 6px; }
.qat .gap { margin-left: 2px; }
.qat .gap + .arr { width: 7px; }
.qat .on { background: #cfe2f3; outline: 1px solid #4a8fd0; outline-offset: -1px; }
.title { flex: 1; text-align: center; font-size: 7px; line-height: 9px; padding-bottom: 4px; color: #333; }
.account { gap: 3px; }
.left-tri { border: 2px solid transparent; border-right-color: #222; border-left: 0; }
.login { display: flex; align-items: center; gap: 2px; }
.far { margin-left: 30px; }
.vsep { width: 1px; height: 10px; background: #b5b5b5; }
.winbtns { gap: 6px; padding: 0 1px 0 48px; }
.winbtns svg { width: 9px; height: 9px; }
.ai {
  position: absolute; right: 0; top: 9px; z-index: 3;
  display: flex; align-items: center; gap: 1px;
  border-radius: 8px 0 0 8px; color: #fff;
  background: linear-gradient(90deg, #7c4df5, #4a6cf7);
}
.ai svg { width: 16px; height: 16px; }

/* ribbon tabs */
.tabs { display: flex; height: 12px; align-items: flex-end; color: #333; }
.tabs button { height: 11px; }
.tabs .file { width: 25px; background: #2b7bb5; color: #fff; }
.tabset { display: flex; margin-left: 6px; }
.plug { gap: 10px; }
.core { gap: 11px; margin-left: 10px; }
.more { color: #fff; margin-left: 5px; line-height: 11px; font-size: 10px; }
.mini { margin-left: 4px; }
.mini svg { width: 16px; height: 8px; }

/* ribbon */
.ribbon { display: flex; height: 54px; background: #e5efd8; border-bottom: 1px solid #d5dccb; }
.panel { flex: none; display: flex; flex-direction: column; background: #ececec; border-right: 1px solid #f8f8f8; }
.body { display: flex; height: 43px; padding-top: 1px; }
.cap { display: flex; justify-content: center; align-items: center; height: 10px; color: #444; }
.cap svg { width: 7px; height: 7px; margin-left: 2px; }
.ctx .cap { background: #e0ecd0; }
.w-sel { width: 28px; } .w-prop { width: 25px; } .w-clip { width: 43px; }
.w-geo { width: 96px; } .w-mod { width: 134px; } .w-view { width: 37px; }
.w-meas { width: 32px; } .w-make { width: 47px; } .w-mode { width: 46px; }
.w-master { width: 160px; } .w-place { width: 63px; }
.body .big { display: flex; flex-direction: column; align-items: center; justify-content: flex-start; flex: 1; padding-top: 2px; gap: 3px; line-height: 9px; }
.big svg, .sq svg, .g2 svg { width: 18px; height: 18px; }
.w-sel .big svg { width: 15px; height: 18px; }
.dim { color: #aaa; }
.body svg.d { width: 6px; height: 6px; }
.stack { flex-direction: column; align-items: center; }
.sq { width: 22px; height: 21px; display: grid; place-items: center; }
.on { background: #c4dcf3; outline: 1px solid #5b9bd8; outline-offset: -1px; }
.g3 { display: grid; grid-template-rows: repeat(3, 14px); grid-auto-columns: 14px; grid-auto-flow: column; }
.g3 button, .g2 button { display: flex; align-items: center; justify-content: center; }
.g3.wd { grid-auto-columns: 19px; }
.g3.wd button { justify-content: flex-start; gap: 2px; }
.g3.lab { grid-auto-columns: 59px; padding-left: 3px; }
.g3.lab button { justify-content: flex-start; gap: 2px; }
.g3.three { padding-left: 3px; }
.g2 { display: grid; grid-template: repeat(2, 21px) / repeat(2, 22px); padding-left: 1px; }
.g2.four { grid-template-columns: repeat(4, 22px); }
.g2.one { grid-template-columns: 30px; }
.w-view .body { padding-left: 2px; }
.body .big.pl { flex: 0 0 24px; padding-top: 1px; }
.body .big.pl.on { flex-basis: 38px; }
.even { padding: 0 1px; }

/* options bar */
.options { display: flex; align-items: center; height: 15px; background: #ededed; }
.ctxname { padding: 0 12px 0 4px; border-right: 1px solid #bbb; }
.chk { display: flex; align-items: center; gap: 2px; padding: 0 8px 0 4px; border-right: 1px solid #bbb; }
.chk input { appearance: none; width: 8px; height: 8px; border: 1px solid #444; background: #fff; }
.plane { padding: 0 2px 0 8px; }
.selwrap { position: relative; display: block; }
.selwrap select { appearance: none; display: block; width: 100%; height: 100%; padding-left: 2px; }
.selwrap svg { position: absolute; right: 1px; top: 2px; width: 8px; height: 8px; pointer-events: none; }
.pl-sel { width: 63px; height: 12px; background: #e4e4e4; border: 1px solid #ccc; }

/* work area */
.work { flex: 1; display: flex; gap: 2px; background: #ededed; border-top: 1px solid #c4c4c4; }
.phead { display: flex; justify-content: space-between; align-items: center; height: 12px; background: #ededed; padding: 0 1px; }
.phead h2 { font-size: 7px; color: #444; }
.phead svg { width: 8px; height: 8px; }
.props { flex: 0 0 123px; display: flex; flex-direction: column; background: #fff; border-right: 1px solid #d2d2d2; }
.typesel { display: flex; align-items: center; margin-left: 2px; height: 41px; background: #efefef; border: 2px solid #ef4a3f; border-radius: 2px; }
.typesel .thumb { width: 35px; height: 36px; }
.typesel span { flex: 1; text-align: left; padding-left: 2px; }
.typesel .d { width: 6px; height: 6px; }
.filterrow { display: flex; height: 13px; background: #ededed; }
.filterrow .selwrap { width: 75px; background: #e3e3e3; border: 1px solid #ccc; }
.edit { flex: 1; display: flex; align-items: center; justify-content: center; gap: 3px; }
.ptable { width: 121px; table-layout: fixed; border-collapse: collapse; }
.c1 { width: 57px; } .c3 { width: 7px; }
.ptable th, .ptable td { height: 11px; padding: 0 0 0 1px; line-height: 9px; font-weight: normal; text-align: left; border: solid #ccc; border-width: 0 1px 1px 0; }
.ptable th { padding-left: 6px; }
.ptable .grp th, .ptable .grp td { height: 12px; padding-left: 1px; background: #dadada; border-width: 0; }
.ptable .grp td { padding-left: 0; }
.ptable svg { width: 7px; height: 8px; }
.ptable .ro { color: #8d8d8d; }
.ptable input { display: block; width: 56px; height: 10px; border: 1px solid #333; background: #fff; }
.pfoot { margin-top: auto; display: flex; justify-content: space-between; align-items: center; height: 14px; background: #ededed; padding: 0 1px; }
.pfoot a { color: #1a6fc4; }
.pfoot button { width: 42px; height: 11px; background: #c8c8c8; color: #8a8a8a; }

/* document area */
.doc { flex: 1; min-width: 0; display: flex; flex-direction: column; }
.vtabs { display: flex; height: 13px; background: #cbcbcb; border-bottom: 1px solid #eee; }
.vtab { display: flex; align-items: center; gap: 6px; width: 71px; padding: 0 2px; color: #777; }
.vtab svg { width: 9px; height: 9px; }
.vtab:not(.cur) svg { opacity: .5; }
.vtab.cur { background: #fafafa; color: #222; font-weight: bold; width: 73px; }
.vtab .cx { width: 8px; height: 8px; margin-left: auto; }
.vmenu { margin-left: auto; }
.vrow { flex: 1; display: flex; }
.viewport { position: relative; flex: 1; overflow: hidden; background: #000; }
.scene { position: absolute; inset: 0; width: 100%; height: 100%; }
.levels { fill: none; stroke: #5c5c5c; stroke-width: 1; }
#found { overflow: visible; }
#found path { stroke: #e6e6e6; stroke-width: 1; }
#found .solid { fill: #777; }
.vcube { position: absolute; right: 14px; top: 26px; width: 72px; height: 66px; }
.navbar { position: absolute; right: 1px; top: 97px; width: 18px; height: 64px; border-radius: 2px; background: #4a4a4a; display: grid; grid-template-rows: 32px 1fr; }
.navbar button { display: grid; place-items: center; }
.navbar button + button { border-top: 1px solid #3a3a3a; padding-bottom: 12px; }
.navbar svg { width: 13px; height: 13px; }
.note { position: absolute; left: 17px; bottom: 28px; white-space: nowrap; font: 18px/23px "Noto Sans CJK SC", sans-serif; color: #e8412f; }
.vscroll { width: 10px; display: flex; flex-direction: column; align-items: center; justify-content: space-between; padding: 1px 0; background: #f0f0f0; }
.vscroll svg { width: 8px; height: 8px; }
.vscroll svg:first-child { transform: rotate(180deg); }
.vscroll i { width: 9px; height: 10px; background: #cdcdcd; }
.vctrl { display: flex; align-items: center; height: 10px; background: #f0f0f0; }
.vctrl button { width: 12px; display: grid; place-items: center; }
.vctrl svg { width: 10px; height: 9px; }
.vctrl .scale { width: 43px; padding-left: 3px; line-height: 9px; }
.vctrl .ang svg { width: 7px; height: 7px; }
.r90 { transform: rotate(90deg); }
.r270 { transform: rotate(-90deg); }
.hscroll { flex: 1; display: flex; justify-content: center; }
.hscroll i { width: 10px; height: 9px; background: #cdcdcd; }
.grip { width: 10px; }

/* project browser */
.browser { flex: 0 0 164px; background: #fff; }
.tree, .tree ul { list-style: none; }
.tree { padding: 0 0 0 1px; }
.tree ul { padding: 1px 0 0 12px; }
.tree > li > ul { padding-bottom: 1px; }
.tree li { position: relative; }
.tree li::before { content: ""; position: absolute; left: 4px; top: 0; bottom: 0; border-left: 1px solid #d0d0d0; }
.tree li:last-child::before { bottom: auto; height: 6px; }
.row { position: relative; display: flex; align-items: center; height: 11px; gap: 3px; }
.row b { position: relative; width: 11px; height: 11px; margin-right: -1px; flex: none; }
.row b::before { content: ""; position: absolute; left: 4px; right: 0; top: 5px; border-top: 1px solid #d0d0d0; }
.ex::after {
  content: ""; position: absolute; left: 2px; top: 3px; width: 5px; height: 5px;
  border: 1px solid #a4a4a4;
  background: linear-gradient(#3d5fa0, #3d5fa0) center / 3px 1px no-repeat, linear-gradient(#3d5fa0, #3d5fa0) center / 1px 3px no-repeat, #fff;
}
.ex.minus::after { background: linear-gradient(#3d5fa0, #3d5fa0) center / 3px 1px no-repeat, #fff; }
.row svg { margin-left: -2px; }
.hit { background: #e2e2e2; height: 11px; line-height: 11px; padding-right: 2px; }

/* status bar */
.status { display: flex; align-items: center; height: 14px; background: #cbcbcb; border-top: 1px solid #dedede; }
.msg { flex: 0 0 49%; padding-left: 1px; }
.st { width: 115px; height: 11px; background: #fff; margin-left: 5px; }
.status > .off { margin-left: 5px; opacity: .5; }
.zero { margin: 0 12px 0 2px; }
.dimtxt { color: #777; margin-left: 4px; }
.selgrp { display: flex; gap: 5px; margin-left: auto; }
.count { margin-right: 41px; }

/* annotation arrows */
.arrows { position: absolute; inset: 0; width: 100%; height: 100%; pointer-events: none; z-index: 5; fill: #ef4a3f; }
```
